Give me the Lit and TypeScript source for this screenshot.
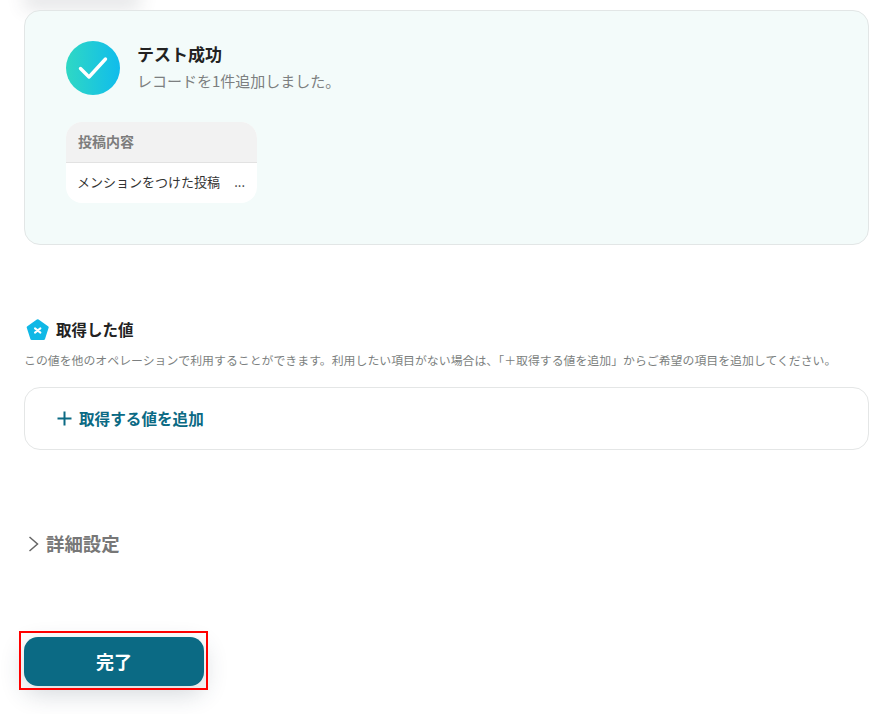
import { LitElement, html, css } from "lit";
import { customElement } from "lit/decorators.js";

@customElement("app-root")
export class AppRoot extends LitElement {
    static styles = css`
        :host {
            display: block;
            width: 890px;
            height: 714px;
            overflow: hidden;
            background: #fff;
            font-family: "Noto Sans CJK JP", "Noto Sans", sans-serif;
            color: #222;
        }
        .page {
            display: flex;
            flex-direction: column;
            padding: 0 21px 0 24px;
        }
        .prev-shadow {
            height: 0;
            width: 100px;
            margin-left: 8px;
            box-shadow: 0 0 18px 8px rgba(60, 70, 80, 0.16);
        }
        /* result card */
        .result {
            margin-top: 10px;
            height: 235px;
            box-sizing: border-box;
            padding: 30px 41px;
            background: #f3fbfa;
            border: 1px solid #e2e6e6;
            border-radius: 16px;
        }
        .status {
            display: flex;
            gap: 17px;
        }
        .circle {
            width: 54px;
            height: 54px;
            flex: none;
            border-radius: 50%;
            background: linear-gradient(90deg, #2fd8c4, #10bcec);
            display: flex;
            align-items: center;
            justify-content: center;
        }
        .status-title {
            font-size: 17px;
            font-weight: 700;
            line-height: 28px;
            margin-top: -1px;
            color: #222;
        }
        .status-sub {
            font-size: 15px;
            line-height: 26px;
            color: #7c7f80;
        }
        .mini-table {
            width: 191px;
            margin-top: 27px;
            border-radius: 16px;
            overflow: hidden;
            background: #fff;
        }
        .mini-head {
            height: 38px;
            padding: 0 11px 2px 12px;
            display: flex;
            align-items: center;
            background: #f2f2f2;
            border-bottom: 1px solid #e2e2e2;
            font-size: 14px;
            font-weight: 700;
            color: #7d7d7d;
        }
        .mini-cell {
            height: 40px;
            box-sizing: border-box;
            padding: 0 12px 3px 11px;
            display: flex;
            align-items: center;
            justify-content: space-between;
            font-size: 13px;
            color: #333;
        }
        /* values section */
        .values {
            margin-top: 74px;
        }
        .values-head {
            display: flex;
            align-items: center;
            gap: 7px;
            padding-left: 2px;
            height: 22px;
            font-size: 15.5px;
            font-weight: 700;
            color: #222;
        }
        .values-head span {
            margin-top: -2px;
        }
        .values-desc {
            margin-top: 10px;
            font-size: 11.9px;
            line-height: 18px;
            color: #7c7f80;
            white-space: nowrap;
        }
        .add-box {
            margin-top: 18px;
            height: 63px;
            box-sizing: border-box;
            padding: 0 0 1px 32px;
            display: flex;
            align-items: center;
            gap: 7px;
            border: 1px solid #e4e6e6;
            border-radius: 16px;
            font-size: 15.6px;
            font-weight: 700;
            color: #0b6a84;
        }
        .details {
            margin-top: 81px;
            display: flex;
            align-items: center;
            gap: 7px;
            padding-left: 4px;
            height: 26px;
            font-size: 18.4px;
            font-weight: 700;
            color: #777;
        }
        .details span {
            margin-top: -3px;
        }
        .done-wrap {
            position: relative;
            width: 180px;
            margin-top: 80px;
        }
        .done {
            display: block;
            width: 180px;
            height: 49px;
            padding: 0 0 2px;
            border: none;
            border-radius: 14px;
            background: #0b6a84;
            color: #fff;
            font: 700 18px "Noto Sans CJK JP", "Noto Sans", sans-serif;
            box-shadow: 0 8px 24px rgba(40, 60, 80, 0.2);
        }
        .highlight {
            position: absolute;
            inset: -6px -4px -4px -5px;
            border: 2px solid #f00;
            pointer-events: none;
        }
    `;

    render() {
        return html`
            <div class="page">
                <div class="prev-shadow"></div>
                <section class="result">
                    <div class="status">
                        <div class="circle">
                            <svg width="30" height="24" viewBox="0 0 30 24" fill="none">
                                <path d="M2.5 12.5 L11 21 L27.5 3" stroke="#fff" stroke-width="3.4" stroke-linecap="round" stroke-linejoin="round" />
                            </svg>
                        </div>
                        <div>
                            <div class="status-title">テスト成功</div>
                            <div class="status-sub">レコードを1件追加しました。</div>
                        </div>
                    </div>
                    <div class="mini-table">
                        <div class="mini-head">投稿内容</div>
                        <div class="mini-cell"><span>メンションをつけた投稿</span><span>...</span></div>
                    </div>
                </section>

                <section class="values">
                    <div class="values-head">
                        <svg width="23" height="22" viewBox="0 0 23 22">
                            <path d="M11.7 1.8 L21.2 8.4 L17.6 19.6 H5.8 L2.2 8.4 Z" fill="#10b8e6" stroke="#10b8e6" stroke-width="3" stroke-linejoin="round" />
                            <path d="M9 9.4 L14.4 13.6 M14.4 9.4 L9 13.6" stroke="#fff" stroke-width="2" stroke-linecap="round" />
                        </svg>
                        <span>取得した値</span>
                    </div>
                    <div class="values-desc">この値を他のオペレーションで利用することができます。利用したい項目がない場合は、「＋取得する値を追加」からご希望の項目を追加してください。</div>
                    <div class="add-box">
                        <svg width="15" height="15" viewBox="0 0 15 15">
                            <path d="M7.5 0.5 V14.5 M0.5 7.5 H14.5" stroke="#0b6a84" stroke-width="2" />
                        </svg>
                        <span>取得する値を追加</span>
                    </div>
                </section>

                <div class="details">
                    <svg width="11" height="16" viewBox="0 0 11 16" fill="none">
                        <path d="M1.5 1 L9.5 8 L1.5 15" stroke="#666" stroke-width="1.5" />
                    </svg>
                    <span>詳細設定</span>
                </div>

                <div class="done-wrap">
                    <button class="done">完了</button>
                    <div class="highlight"></div>
                </div>
            </div>
        `;
    }
}
